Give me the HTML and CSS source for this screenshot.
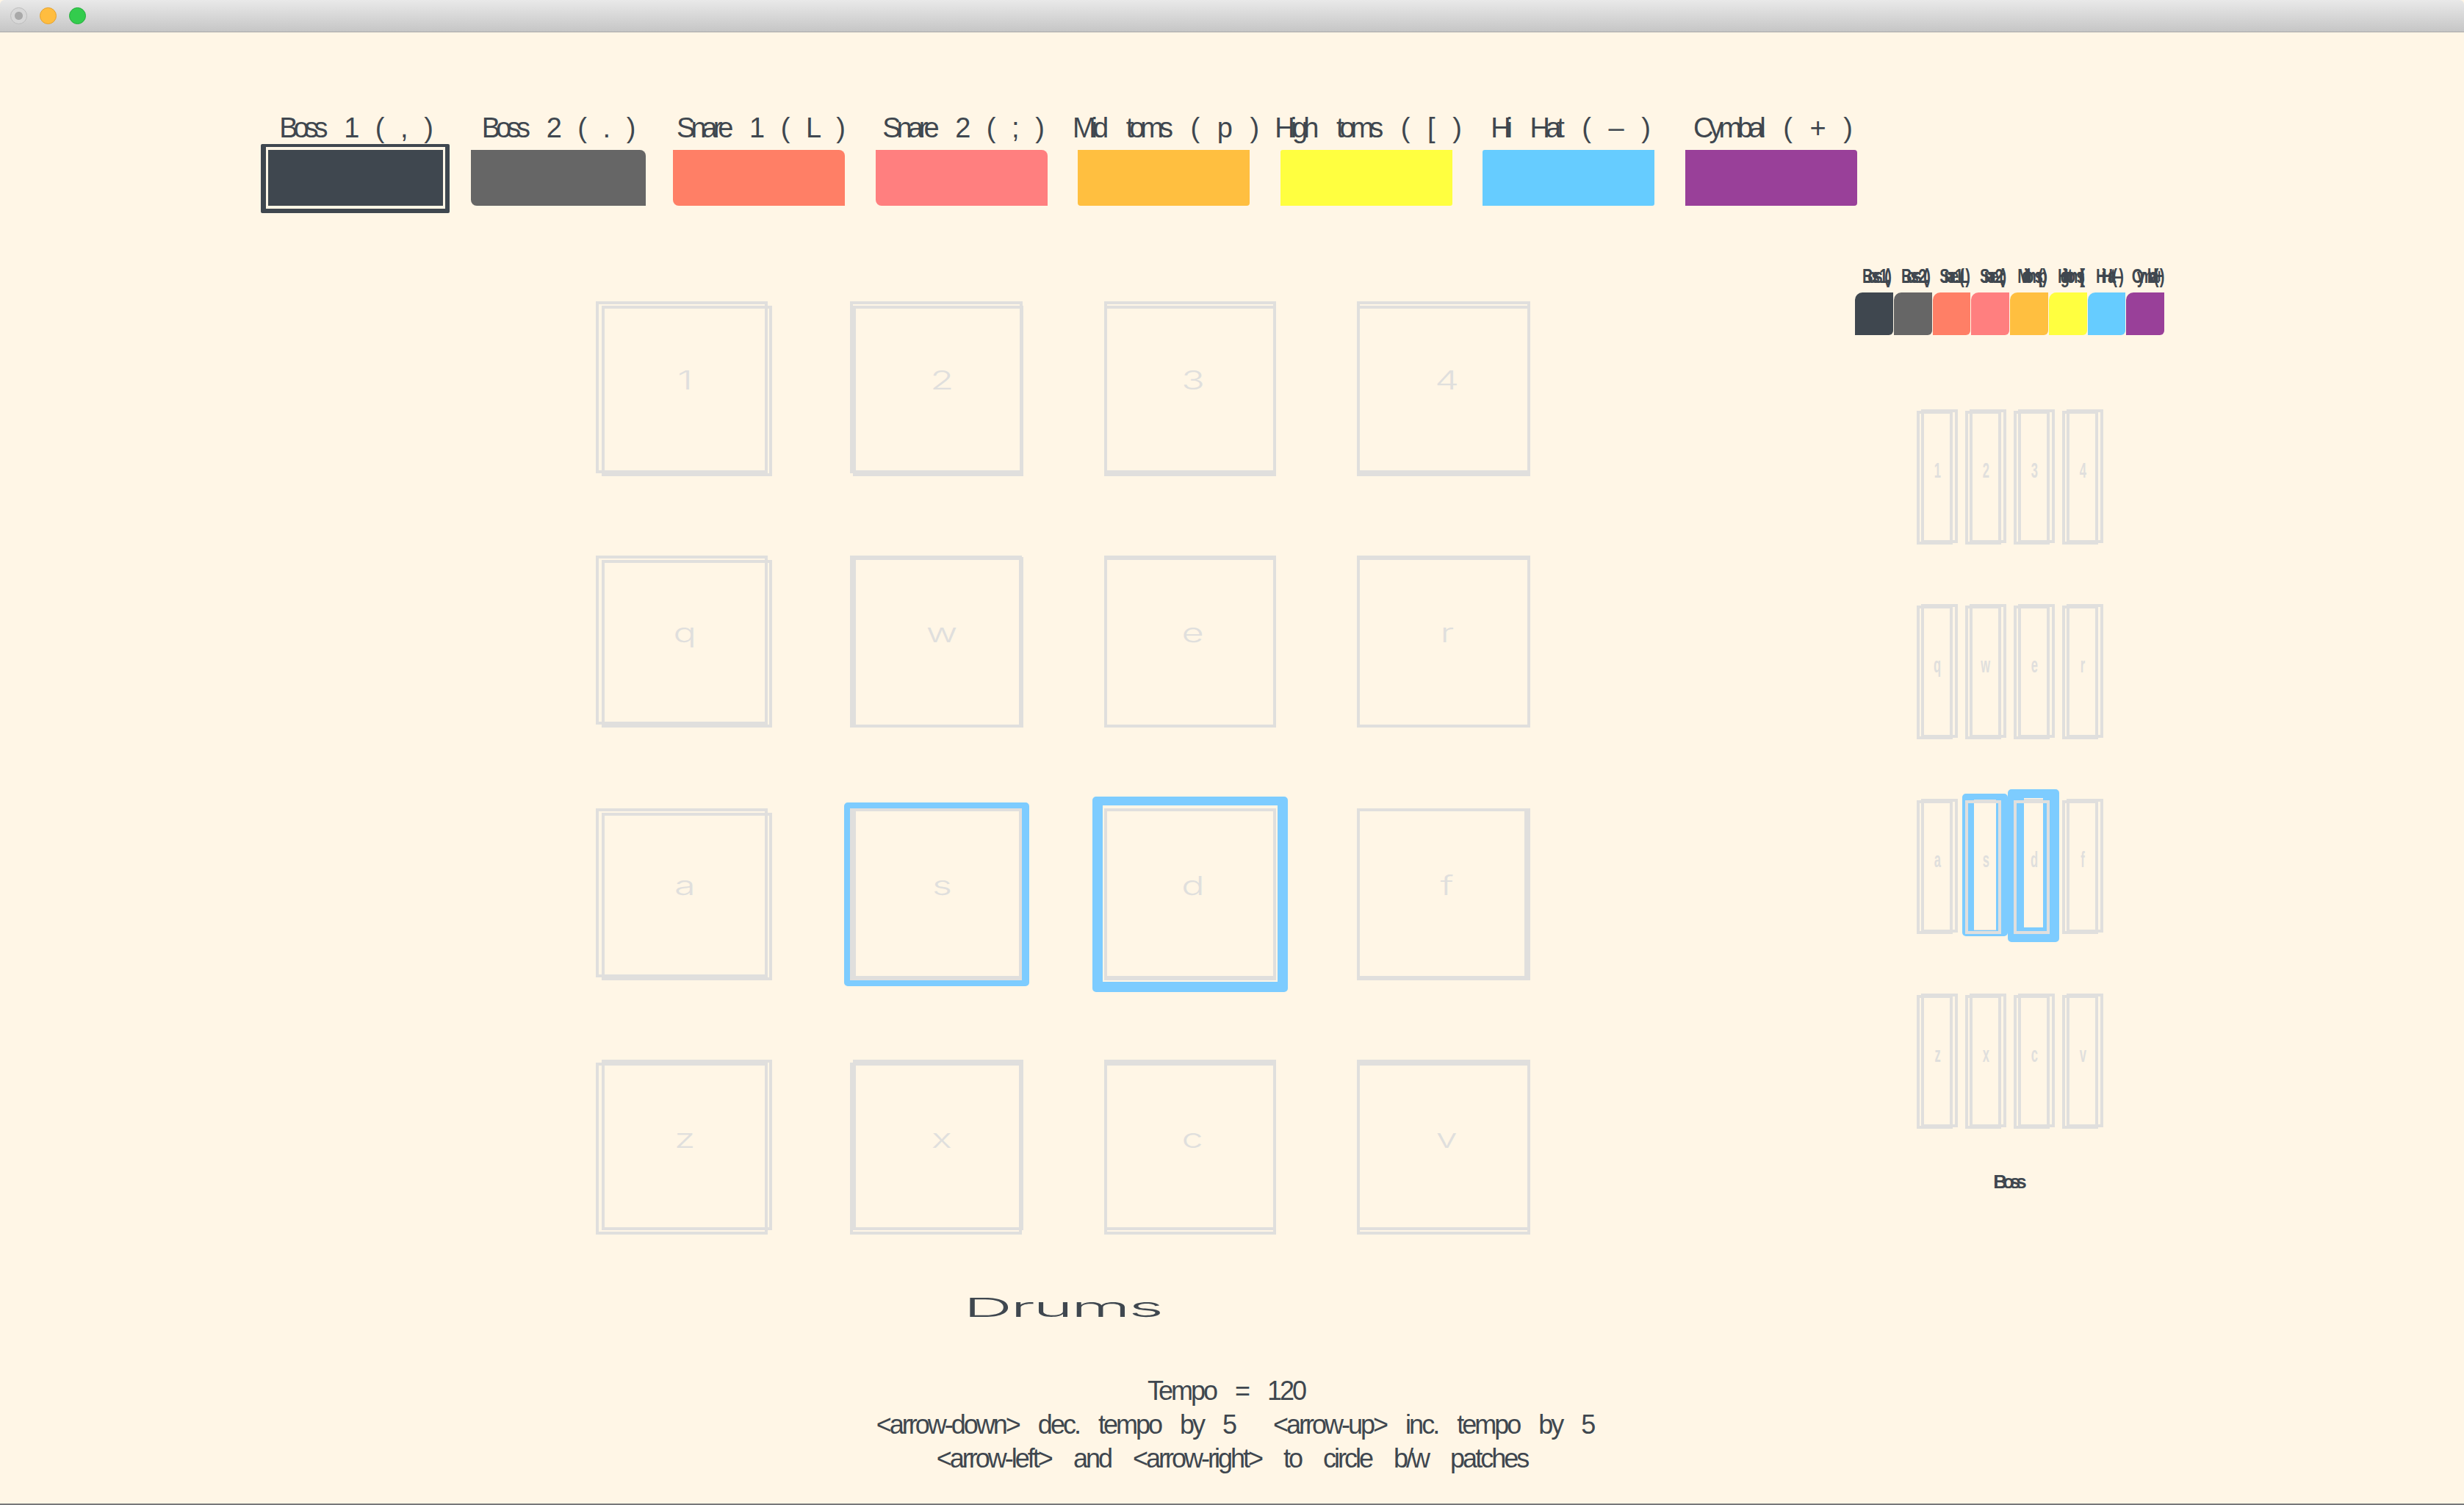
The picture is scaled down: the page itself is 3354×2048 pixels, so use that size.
FILE: index.html
```html
<!DOCTYPE html>
<html lang="en">
<head>
    <meta charset="UTF-8">
    <title>Drums</title>
    <link rel="stylesheet" href="styles.css">
</head>
<body>
    <div class="titlebar">
        <span class="light light-off"></span>
        <span class="light light-min"></span>
        <span class="light light-max"></span>
    </div>

    <div class="patches">
        <div class="patch">
            <div class="patch-name">Boss 1 ( , )</div>
            <div class="swatch selected c-boss1"></div>
        </div>
        <div class="patch">
            <div class="patch-name">Boss 2 ( . )</div>
            <div class="swatch c-boss2 corner-a"></div>
        </div>
        <div class="patch">
            <div class="patch-name">Snare 1 ( L )</div>
            <div class="swatch c-snare1 corner-a"></div>
        </div>
        <div class="patch">
            <div class="patch-name">Snare 2 ( ; )</div>
            <div class="swatch c-snare2 corner-a"></div>
        </div>
        <div class="patch">
            <div class="patch-name loose">Mid toms ( p )</div>
            <div class="swatch c-mid corner-b"></div>
        </div>
        <div class="patch">
            <div class="patch-name loose">High toms ( [ )</div>
            <div class="swatch c-high corner-c"></div>
        </div>
        <div class="patch">
            <div class="patch-name loose">Hi Hat ( – )</div>
            <div class="swatch c-hat corner-c"></div>
        </div>
        <div class="patch">
            <div class="patch-name loose">Cymbal ( + )</div>
            <div class="swatch c-cymbal corner-d"></div>
        </div>
    </div>

    <div class="stage">
        <div class="board">
            <div class="pads">
                <div class="pad wide double"><span class="key">1</span></div>
                <div class="pad top-gap"><span class="key">2</span></div>
                <div class="pad top-gap-thin"><span class="key">3</span></div>
                <div class="pad top-gap-thin"><span class="key">4</span></div>
                <div class="pad wide double short"><span class="key">q</span></div>
                <div class="pad fat-left short"><span class="key">w</span></div>
                <div class="pad plain short"><span class="key">e</span></div>
                <div class="pad plain short"><span class="key">r</span></div>
                <div class="pad wide double"><span class="key">a</span></div>
                <div class="pad hit-s"><span class="ring"></span><span class="key">s</span></div>
                <div class="pad hit-d"><span class="ring"></span><span class="key">d</span></div>
                <div class="pad fat-right"><span class="key">f</span></div>
                <div class="pad wide bottom-gap"><span class="key">z</span></div>
                <div class="pad bottom-gap-left"><span class="key">x</span></div>
                <div class="pad bottom-gap-thin"><span class="key">c</span></div>
                <div class="pad bottom-gap-thin"><span class="key">v</span></div>
            </div>
            <div class="board-title"><span>Drums</span></div>
        </div>

        <div class="mini">
            <div class="mini-names">
                <span>Boss 1 ( , )</span>
                <span>Boss 2 ( . )</span>
                <span class="tight">Snare 1 ( L )</span>
                <span class="tight">Snare 2 ( ; )</span>
                <span class="tighter">Mid toms ( p )</span>
                <span class="tighter">High toms ( [ )</span>
                <span>Hi Hat ( – )</span>
                <span class="tight">Cymbal ( + )</span>
            </div>
            <div class="mini-swatches">
                <div class="mini-swatch c-boss1"></div>
                <div class="mini-swatch c-boss2"></div>
                <div class="mini-swatch c-snare1"></div>
                <div class="mini-swatch c-snare2"></div>
                <div class="mini-swatch c-mid"></div>
                <div class="mini-swatch c-high"></div>
                <div class="mini-swatch c-hat"></div>
                <div class="mini-swatch c-cymbal"></div>
            </div>
            <div class="mini-pads">
                <div class="mini-pad"><span class="mini-key">1</span></div>
                <div class="mini-pad"><span class="mini-key">2</span></div>
                <div class="mini-pad"><span class="mini-key">3</span></div>
                <div class="mini-pad"><span class="mini-key">4</span></div>
                <div class="mini-pad"><span class="mini-key">q</span></div>
                <div class="mini-pad"><span class="mini-key">w</span></div>
                <div class="mini-pad"><span class="mini-key">e</span></div>
                <div class="mini-pad"><span class="mini-key">r</span></div>
                <div class="mini-pad"><span class="mini-key">a</span></div>
                <div class="mini-pad mini-hit-s"><span class="ring"></span><span class="mini-key">s</span></div>
                <div class="mini-pad mini-hit-d"><span class="ring"></span><span class="mini-key">d</span></div>
                <div class="mini-pad"><span class="mini-key">f</span></div>
                <div class="mini-pad"><span class="mini-key">z</span></div>
                <div class="mini-pad"><span class="mini-key">x</span></div>
                <div class="mini-pad"><span class="mini-key">c</span></div>
                <div class="mini-pad"><span class="mini-key">v</span></div>
            </div>
            <div class="mini-title">Boss</div>
        </div>
    </div>

    <div class="help">
        <div class="help-first">Tempo = 120</div>
        <div class="help-keys">&lt;arrow-down&gt; dec. tempo by 5&nbsp; &lt;arrow-up&gt; inc. tempo by 5</div>
        <div class="help-last">&lt;arrow-left&gt; and &lt;arrow-right&gt; to circle b/w patches</div>
    </div>
</body>
</html>
```

FILE: styles.css
```css
body {
    margin: 0;
    height: 2048px;
    box-sizing: border-box;
    overflow: hidden;
    background-color: #fff6e6;
    border-bottom: 2px solid #77787a;
    color: #3f474f;
    font-family: "Liberation Sans", Arial, sans-serif;
    font-size: 36px;
    line-height: 46px;
}

/* window chrome */
.titlebar {
    height: 43px;
    display: flex;
    align-items: center;
    gap: 17px;
    padding-left: 14px;
    background: linear-gradient(#e9e9e9, #c6c6c6);
    border-bottom: 1px solid #a9a9a9;
    border-radius: 6px 6px 0 0;
}

.light {
    width: 23px;
    height: 23px;
    box-sizing: border-box;
    border-radius: 50%;
}

.light-off {
    border: 1px solid #bdbdbd;
    background: radial-gradient(circle, #a9a9a9 0 5px, #d8d8d8 6px);
}

.light-min {
    background-color: #ffbd3f;
    border: 1px solid #e5a22f;
}

.light-max {
    background-color: #33cc4d;
    border: 1px solid #25ad3c;
}

/* patch selector */
.patches {
    display: flex;
    gap: 41.5px;
    padding: 107px 0 0 365px;
}

.patch {
    width: 234px;
    display: flex;
    flex-direction: column;
    align-items: center;
}

.patch-name {
    font-size: 38px;
    letter-spacing: -6px;
    word-spacing: 23px;
    white-space: nowrap;
    margin-bottom: 7px;
}

.patch-name.loose {
    word-spacing: 25px;
}

.swatch {
    position: relative;
    width: 100%;
    height: 76px;
}

.corner-a { border-radius: 0 8px 0 8px; }
.corner-b { border-radius: 0 0 4px 4px; }
.corner-c { border-radius: 3px 0 3px 0; }
.corner-d { border-radius: 0 4px 4px 0; }

.selected {
    width: 238px;
    align-self: flex-start;
}

.selected::after {
    content: "";
    position: absolute;
    top: -8px;
    right: -9px;
    bottom: -10px;
    left: -10px;
    border: solid #3f474f;
    border-width: 4px 6px 6px 7px;
    border-radius: 2px;
}

.swatch.c-boss2 {
    width: 238px;
    align-self: flex-start;
}

.c-boss1 { background-color: #3f474f; }
.c-boss2 { background-color: #666666; }
.c-snare1 { background-color: #ff7f66; }
.c-snare2 { background-color: #ff7f7f; }
.c-mid { background-color: #ffbf40; }
.c-high { background-color: #ffff40; }
.c-hat { background-color: #66ccff; }
.c-cymbal { background-color: #994099; }

/* main pads */
.stage {
    display: flex;
    align-items: flex-start;
    padding-left: 811px;
}

.board {
    width: 1272px;
    padding-top: 130px;
}

.pads {
    display: grid;
    grid-template-columns: 236px 236px 234px 236px;
    grid-template-rows: 238px 236px 234px 238px;
    column-gap: 110px;
    row-gap: 108px;
}

.pad,
.mini-pad {
    position: relative;
    display: flex;
    justify-content: center;
    align-items: center;
    color: #e0dfdd;
}

.wide { width: 240px; }
.short { height: 234px; }

.pad::before,
.pad::after,
.mini-pad::before,
.mini-pad::after {
    content: "";
    position: absolute;
    z-index: 2;
    border: 4px solid #e0dfdd;
}

/* each pad is two hand-drawn rects that don't quite line up */
.double::before { inset: 0 6px 4px 0; }
.double::after { inset: 6px 0 0 8px; }

.top-gap::before { inset: 0 1px 4px 0; }
.top-gap::after { inset: 6px 0 0 4px; }

.top-gap-thin::before { inset: 0 0 4px 0; }
.top-gap-thin::after { inset: 6px 0 0 0; }

.fat-left::before { inset: 0 2px 0 0; }
.fat-left::after { inset: 2px 0 0 4px; }

.plain::before { inset: 0; }
.plain::after { inset: 2px 0 0 0; }

.fat-right::before { inset: 0 4px 2px 0; }
.fat-right::after { inset: 0; }

.bottom-gap::before { inset: 4px 6px 0 0; }
.bottom-gap::after { inset: 0 0 6px 8px; }

.bottom-gap-left::before { inset: 4px 2px 0 0; }
.bottom-gap-left::after { inset: 0 0 6px 4px; }

.bottom-gap-thin::before { inset: 4px 0 0 0; }
.bottom-gap-thin::after { inset: 0 0 6px 0; }

.hit-s::before { inset: 0 2px 0 0; }
.hit-s::after { inset: 0 2px 0 4px; border-bottom-width: 6px; }

.hit-d::before { inset: 0; }
.hit-d::after { inset: 0; border-bottom-width: 6px; }

.ring {
    position: absolute;
    z-index: 1;
    border: solid #7dccff;
    border-radius: 5px;
}

.hit-s .ring {
    inset: -8px;
    border-width: 8px 10px 8px 8px;
}

.hit-d .ring {
    inset: -16px;
    border-width: 12px 14px 14px 14px;
}

.key {
    font-family: Inter, "Liberation Sans", sans-serif;
    font-weight: 300;
    font-size: 36px;
    padding: 0 0 24px 2px;
    transform: scaleX(1.45);
}

.pad:nth-child(4n+2) .key { padding-left: 10px; }
.pad:nth-child(4n+3) .key { padding-left: 5px; }
.pad:nth-child(4n) .key { padding-left: 6px; }

.board-title {
    margin-top: 76px;
    display: flex;
    justify-content: center;
    font-family: Inter, "Liberation Sans", sans-serif;
    font-weight: 300;
}

.board-title span {
    letter-spacing: -1px;
    transform: scaleX(2.57);
}

/* mini preview on the right */
.mini {
    width: 422px;
    margin-left: 442px;
    padding-top: 78px;
    display: flex;
    flex-direction: column;
    align-items: center;
}

.mini-names,
.mini-swatches {
    display: grid;
    grid-template-columns: repeat(8, 52.75px);
}

.mini-names {
    height: 36px;
    margin-bottom: 4px;
    font-size: 28px;
    line-height: 36px;
    font-weight: 700;
    letter-spacing: -10px;
    word-spacing: 6px;
    white-space: nowrap;
}

.mini-names span {
    display: flex;
    justify-content: center;
    transform: scaleX(0.72);
}

.mini-names .tight { letter-spacing: -10.5px; }
.mini-names .tighter { letter-spacing: -11.5px; }

.mini-swatch {
    height: 58px;
    margin-right: 1px;
    border-radius: 10px 0 6px 0;
}

.mini-pads {
    margin-top: 101px;
    display: grid;
    grid-template-columns: repeat(4, 56px);
    grid-auto-rows: 184px;
    column-gap: 10px;
    row-gap: 81px;
}

.mini-pad::before { inset: 2px 7px 0 0; }
.mini-pad::after { inset: 0 0 2px 6px; }

/* the second rect of a lit mini pad sits under the blue ring */
.mini-hit-s::after,
.mini-hit-d::after {
    z-index: 0;
}

.mini-key {
    font-size: 30px;
    font-weight: 700;
    padding-bottom: 18px;
    transform: scaleX(0.55);
}

.mini-hit-s .ring {
    inset: -7px -2px -3px -4px;
    border-width: 8px 16px 8px 16px;
}

.mini-hit-d .ring {
    inset: -13px -6px -11px -8px;
    border-width: 12px 22px 20px 22px;
}

.mini-title {
    margin-top: 56px;
    padding-right: 6px;
    font-size: 26px;
    line-height: 32px;
    font-weight: 700;
    letter-spacing: -6px;
}

/* key help at the bottom */
.help {
    margin-top: 68px;
    text-align: center;
    letter-spacing: -3px;
    word-spacing: 19px;
}

.help-first {
    padding-right: 16px;
}

.help-keys {
    padding-left: 8px;
}

.help-last {
    word-spacing: 23px;
}
```
